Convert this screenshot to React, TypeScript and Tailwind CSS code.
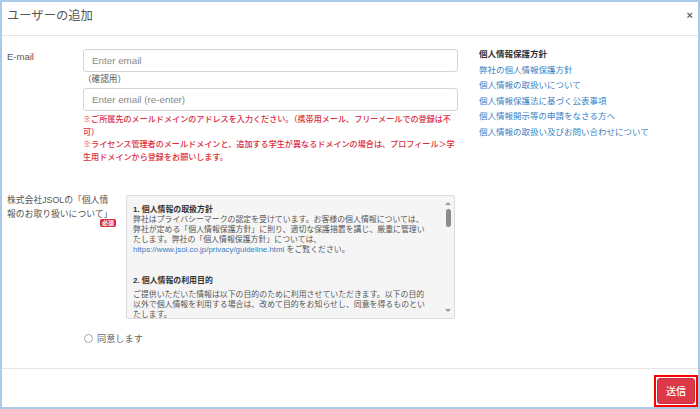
import React from 'react'

const LINKS = [
  '弊社の個人情報保護方針',
  '個人情報の取扱いについて',
  '個人情報保護法に基づく公表事項',
  '個人情報開示等の申請をなさる方へ',
  '個人情報の取扱い及びお問い合わせについて',
]

function EmailInput({ placeholder }: { placeholder: string }) {
  return (
    <input
      type="text"
      placeholder={placeholder}
      className="w-full h-[23px] border border-[#d4d4d4] rounded-[3px] pl-[8px] text-[9.8px] text-[#555] placeholder:text-[#8a8a8a] outline-none bg-white"
    />
  )
}

function FakeScrollbar() {
  return (
    <div className="w-[10px] shrink-0 flex flex-col items-center pt-[6px] pb-[6px] mr-[1px]">
      {/* up arrow */}
      <div className="w-0 h-0 border-l-[3px] border-r-[3px] border-b-[3px] border-l-transparent border-r-transparent border-b-[#999]" />
      <div className="w-[5px] h-[18px] rounded-full bg-[#8c8c8c] mt-[4px]" />
      <div className="flex-1" />
      {/* down arrow */}
      <div className="w-0 h-0 border-l-[3px] border-r-[3px] border-t-[3px] border-l-transparent border-r-transparent border-t-[#999]" />
    </div>
  )
}

export default function App() {
  return (
    <div className="w-[700px] h-[409px] bg-white border-2 border-[#a9cbe9] flex flex-col font-['Liberation_Sans','Noto_Sans_CJK_JP',sans-serif] text-[#555]">
      {/* Header */}
      <div className="h-[34px] shrink-0 border-b border-[#e6e6e6] flex items-start justify-between pl-[5px] pr-[5px] pt-[6px]">
        <h1 className="text-[12.3px] leading-[16px] text-[#555]">ユーザーの追加</h1>
        <button className="text-[11px] leading-[12px] font-bold text-[#666] mt-[1px]">×</button>
      </div>

      {/* Body */}
      <div className="flex-1 pl-[5px]">
        {/* E-mail row */}
        <div className="flex items-start pt-[8px]">
          <div className="w-[76px] shrink-0 pt-[7px] text-[9.5px] leading-[12px] text-[#555]">E-mail</div>
          <div className="w-[375px] shrink-0 pt-[3px]">
            <EmailInput placeholder="Enter email" />
            <div className="h-[14px] text-[8.6px] leading-[14px] text-[#555]">（確認用）</div>
            <EmailInput placeholder="Enter email (re-enter)" />
            <div className="mt-[3px] text-[8.1px] leading-[12.7px] text-[#dc2b3d] font-medium whitespace-nowrap">
              <p>
                ※ご所属先のメールドメインのアドレスを入力ください。（携帯用メール、フリーメールでの登録は不
                <br />
                可）
              </p>
              <p>
                ※ライセンス管理者のメールドメインと、追加する学生が異なるドメインの場合は、プロフィール＞学
                <br />
                生用ドメインから登録をお願いします。
              </p>
            </div>
          </div>
          <div className="ml-[21px] pt-[3px] text-[8.5px] leading-[15.6px]">
            <div className="font-bold text-[#333]">個人情報保護方針</div>
            {LINKS.map((link) => (
              <a key={link} href="#" className="block text-[#3a7fc3]">
                {link}
              </a>
            ))}
          </div>
        </div>

        {/* Privacy agreement row */}
        <div className="flex items-start mt-[30px]">
          <div className="w-[109px] shrink-0 -mt-[2px] text-[8.8px] leading-[14px] text-[#555]">
            <div className="whitespace-nowrap">
              株式会社JSOLの「個人情
              <br />
              報のお取り扱いについて」
            </div>
            <div className="flex justify-end -mt-[2px]">
              <span className="bg-[#d9283c] text-white text-[6px] leading-[8px] px-[2px] rounded-[2px] font-bold">
                必須
              </span>
            </div>
          </div>
          <div className="ml-[10px] w-[329px] h-[124px] border border-[#dcdcdc] rounded-[2px] bg-[#f5f5f5] flex overflow-hidden">
            <div className="flex-1 overflow-hidden pl-[6px] pt-[9px] text-[7.9px] leading-[10px] text-[#555] whitespace-nowrap">
              <p className="font-bold text-[#333]">1. 個人情報の取扱方針</p>
              <p className="mb-[21px]">
                弊社はプライバシーマークの認定を受けています。お客様の個人情報については、
                <br />
                弊社が定める「個人情報保護方針」に則り、適切な保護措置を講じ、厳重に管理い
                <br />
                たします。弊社の「個人情報保護方針」については、
                <br />
                <a href="#" className="text-[#3a7fc3]">https://www.jsol.co.jp/privacy/guideline.html</a> をご覧ください。
              </p>
              <p className="font-bold text-[#333] mb-[4px]">2. 個人情報の利用目的</p>
              <p>
                ご提供いただいた情報は以下の目的のために利用させていただきます。以下の目的
                <br />
                以外で個人情報を利用する場合は、改めて目的をお知らせし、同意を得るものとい
                <br />
                たします。
              </p>
            </div>
            <FakeScrollbar />
          </div>
        </div>

        {/* Agree radio */}
        <label className="flex items-center gap-[4px] ml-[77px] mt-[14px] h-[12px]">
          <span className="w-[9px] h-[9px] rounded-full border border-[#a8a8a8] bg-white" />
          <span className="text-[9.2px] leading-[12px] text-[#666]">同意します</span>
        </label>
      </div>

      {/* Footer */}
      <div className="h-[39px] shrink-0 border-t border-[#e6e6e6] flex items-start justify-end pt-[6px]">
        <div className="border-2 border-[#ff0000] p-[1px]">
          <button className="block w-[38px] h-[26px] rounded-[3px] bg-[#dc3848] border border-[#c9303f] text-white text-[10px] font-medium">
            送信
          </button>
        </div>
      </div>
    </div>
  )
}
